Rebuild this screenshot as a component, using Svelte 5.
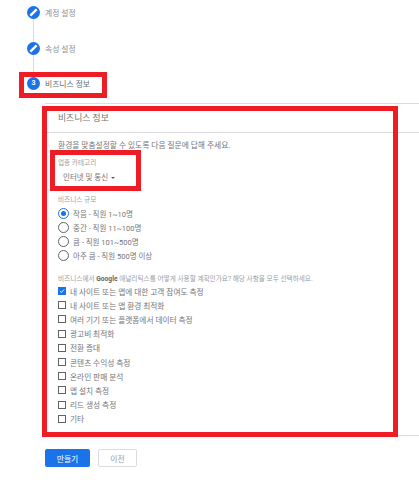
<script>
  const sizes = ['작음 - 직원 1~10명', '중간 - 직원 11~100명', '큼 - 직원 101~500명', '아주 큼 - 직원 500명 이상'];
  const uses = [
    ['내 사이트 또는 앱에 대한 고객 참여도 측정', true],
    ['내 사이트 또는 앱 환경 최적화', false],
    ['여러 기기 또는 플랫폼에서 데이터 측정', false],
    ['광고비 최적화', false],
    ['전환 증대', false],
    ['콘텐츠 수익성 측정', false],
    ['온라인 판매 분석', false],
    ['앱 설치 측정', false],
    ['리드 생성 측정', false],
    ['기타', false]
  ];
</script>

<div class="page">
  <div class="step">
    <span class="dot"><svg viewBox="0 0 14 14" width="11" height="11"><path d="M3 11 L11 3" stroke="#fff" stroke-width="3"/></svg></span>
    <span class="step-label">계정 설정</span>
  </div>
  <div class="connector"></div>
  <div class="step">
    <span class="dot"><svg viewBox="0 0 14 14" width="11" height="11"><path d="M3 11 L11 3" stroke="#fff" stroke-width="3"/></svg></span>
    <span class="step-label">속성 설정</span>
  </div>
  <div class="connector short"></div>
  <div class="step">
    <span class="dot num">3</span>
    <span class="step-label active">비즈니스 정보</span>
  </div>

  <section class="card">
    <h2>비즈니스 정보</h2>
    <div class="body">
      <p class="intro">환경을 맞춤설정할 수 있도록 다음 질문에 답해 주세요.</p>
      <div class="caption cat">업종 카테고리</div>
      <div class="select">인터넷 및 통신 <i></i></div>
      <div class="caption size">비즈니스 규모</div>
      <div class="radios">
        {#each sizes as s, i}
          <label class="opt"><span class="radio" class:on={i === 0}></span>{s}</label>
        {/each}
      </div>
      <div class="caption q">비즈니스에서 <b>Google</b> 애널리틱스를 어떻게 사용할 계획인가요? 해당 사항을 모두 선택하세요.</div>
      <div class="checks">
        {#each uses as [t, on]}
          <label class="opt chk"><span class="box" class:on={on}>{#if on}<svg viewBox="0 0 8 8" width="8" height="8"><path d="M1.2 4.2 L3.2 6 L6.8 2" fill="none" stroke="#fff" stroke-width="1.2"/></svg>{/if}</span>{t}</label>
        {/each}
      </div>
    </div>
  </section>

  <div class="actions">
    <button class="primary">만들기</button>
    <button class="ghost">이전</button>
  </div>

  <div class="mark m1"></div>
  <div class="mark m2"></div>
  <div class="mark m3"></div>
</div>

<style>
  :global(body) { margin: 0; background: #fff; }
  .page {
    position: relative;
    width: 419px;
    height: 482px;
    overflow: hidden;
    box-sizing: border-box;
    padding-top: 6px;
    font-family: Roboto, "Noto Sans CJK KR", sans-serif;
    color: #757575;
    font-size: 8px;
  }
  .step { display: flex; align-items: center; gap: 6px; padding-left: 27px; height: 12px; }
  .dot {
    width: 13px; height: 13px; border-radius: 50%; background: #1a73e8; color: #fff; flex: none;
    display: flex; align-items: center; justify-content: center; font-size: 7px; font-weight: 700;
  }
  .step-label { color: #8a8f94; font-size: 7.8px; margin-left: -1px; }
  .step-label.active { color: #666a6e; }
  .connector { width: 1px; height: 24px; background: #dadce0; margin-left: 33px; }
  .connector.short { height: 23px; }
  .card {
    margin: 14px 0 0 45px;
    border-top: 1px solid #dadce0;
    border-bottom: 1px solid #dadce0;
    height: 333px;
    box-sizing: border-box;
  }
  h2 {
    margin: 0; font-weight: 400; font-size: 8.8px; color: #757575;
    height: 28px; line-height: 28px; padding-left: 13px;
    border-bottom: 1px solid #dadce0;
  }
  .body { padding: 7px 0 0 13px; }
  .intro { margin: 0; font-size: 7.75px; line-height: 12px; color: #757575; }
  .caption { font-size: 6.65px; color: #9aa0a6; line-height: 10px; }
  .caption b { color: #5f6368; }
  .caption.cat { margin-top: 6px; }
  .select { margin: 4px 0 0 5px; line-height: 12px; font-size: 7.5px; color: #757575; }
  .select i {
    display: inline-block; width: 0; height: 0; vertical-align: middle; margin-left: 1px;
    border-left: 2px solid transparent; border-right: 2px solid transparent; border-top: 2px solid #5f6368;
  }
  .caption.size { margin-top: 11px; }
  .radios { margin-top: 1px; display: flex; flex-direction: column; }
  .opt { display: flex; align-items: center; gap: 4px; font-size: 7.7px; color: #757575; }
  .radios .opt { height: 14px; font-size: 7.5px; }
  .radio {
    width: 9px; height: 9px; border: 1px solid #5f6368; border-radius: 50%; position: relative; flex: none;
  }
  .radio.on { border-color: #1a73e8; }
  .radio.on::after {
    content: ""; position: absolute; left: 2px; top: 2px; width: 5px; height: 5px; border-radius: 50%; background: #1a73e8;
  }
  .caption.q { margin-top: 12px; }
  .checks { display: flex; flex-direction: column; }
  .chk { height: 14.2px; gap: 4px; }
  .box {
    width: 6px; height: 6px; border: 1px solid #5f6368; flex: none; display: flex; align-items: center; justify-content: center;
  }
  .box.on { background: #1a73e8; border-color: #1a73e8; }
  .actions { display: flex; gap: 8px; margin: 13px 0 0 45px; }
  button {
    font: inherit; font-size: 7.8px; height: 18px; border-radius: 2px; padding: 0; box-sizing: border-box;
  }
  .primary { width: 45px; background: #1a73e8; color: #fff; border: 0; }
  .ghost { width: 39px; background: #fff; border: 1px solid #dadce0; color: #9aa0a6; }
  .mark { position: absolute; border: 5px solid #ee1c25; box-sizing: border-box; pointer-events: none; }
  .m1 { left: 19px; top: 72px; width: 88px; height: 26px; }
  .m2 { left: 42px; top: 106px; width: 356px; height: 331px; }
  .m3 { left: 50px; top: 150px; width: 91px; height: 41px; }
</style>
